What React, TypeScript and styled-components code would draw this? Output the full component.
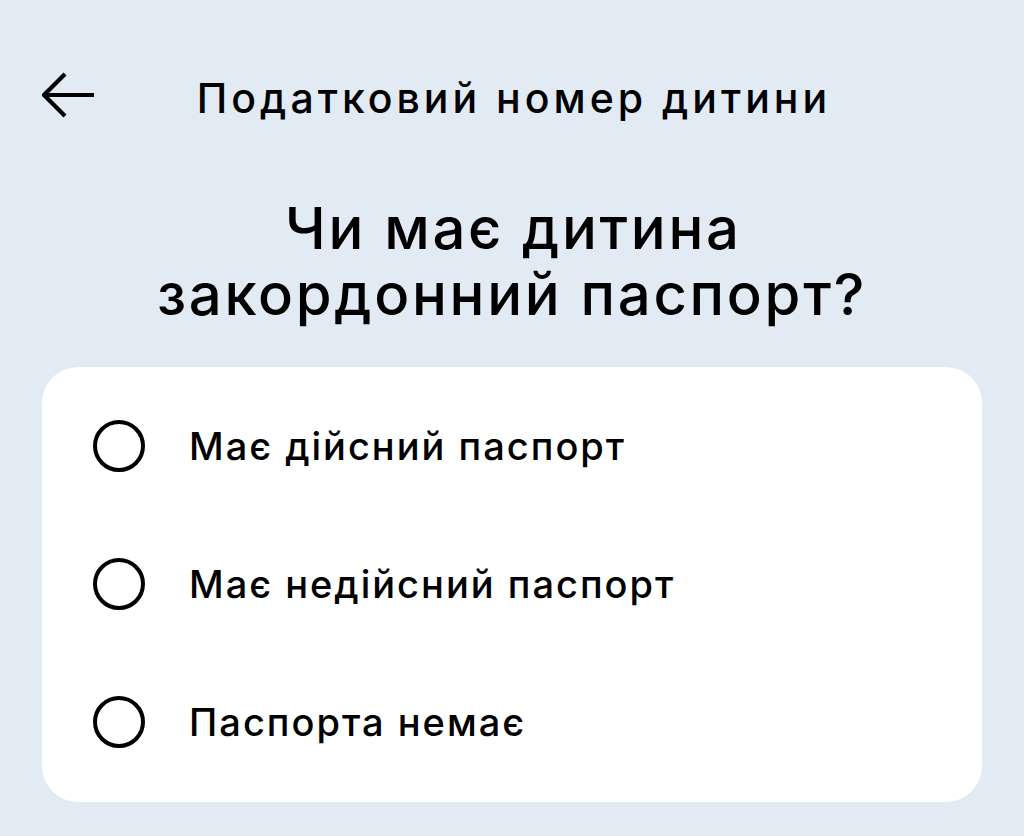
import React from "react";
import styled, { createGlobalStyle } from "styled-components";

const GlobalStyle = createGlobalStyle`
  html, body {
    margin: 0;
    padding: 0;
    background: #e2ebf4;
  }
  body {
    font-family: Inter, "Noto Sans", "Liberation Sans", sans-serif;
    color: #000;
  }
`;

const Page = styled.div`
  width: 1024px;
  min-height: 836px;
  box-sizing: border-box;
  padding: 74px 42px 0 42px;
  display: flex;
  flex-direction: column;
  background: #e2ebf4;
`;

const Header = styled.header`
  display: grid;
  grid-template-columns: 1fr auto 1fr;
  align-items: center;
  height: 48px;
`;

const BackButton = styled.button`
  justify-self: start;
  width: 56px;
  height: 48px;
  margin-top: -7px;
  padding: 0;
  border: 0;
  background: transparent;
  display: flex;
  align-items: center;
  cursor: pointer;
`;

const Title = styled.h1`
  margin: 0 -4px 0 0;
  font-size: 41px;
  line-height: 48px;
  font-weight: 500;
  letter-spacing: 4px;
  white-space: nowrap;
`;

const Question = styled.h2`
  margin: 73px 0 0 0;
  text-align: center;
  font-size: 58px;
  line-height: 66px;
  font-weight: 500;
  letter-spacing: 2.7px;
  text-indent: 2.7px;
`;

const Card = styled.div`
  margin-top: 40px;
  background: #fff;
  border-radius: 36px;
  padding: 10px 51px 11px 51px;
  display: flex;
  flex-direction: column;
`;

const Option = styled.label`
  height: 138px;
  display: flex;
  align-items: center;
  gap: 44px;
  cursor: pointer;
`;

const Radio = styled.span`
  width: 52px;
  height: 52px;
  box-sizing: border-box;
  border: 4.5px solid #000;
  border-radius: 50%;
  flex: none;
`;

const OptionText = styled.span`
  font-size: 38px;
  line-height: 46px;
  font-weight: 500;
  letter-spacing: 2px;
`;

const options = ["Має дійсний паспорт", "Має недійсний паспорт", "Паспорта немає"];

export default function App() {
  return (
    <>
      <GlobalStyle />
      <Page>
        <Header>
          <BackButton aria-label="Назад">
            <svg width="54" height="46" viewBox="0 0 54 46" fill="none">
              <path
                d="M2 23H52M23 2L2 23L23 44"
                stroke="#000"
                strokeWidth="4.2"
                strokeLinecap="butt"
                strokeLinejoin="miter"
              />
            </svg>
          </BackButton>
          <Title>Податковий номер дитини</Title>
          <div />
        </Header>
        <Question>
          Чи має дитина
          <br />
          закордонний паспорт?
        </Question>
        <Card>
          {options.map((o) => (
            <Option key={o}>
              <Radio />
              <OptionText>{o}</OptionText>
            </Option>
          ))}
        </Card>
      </Page>
    </>
  );
}
